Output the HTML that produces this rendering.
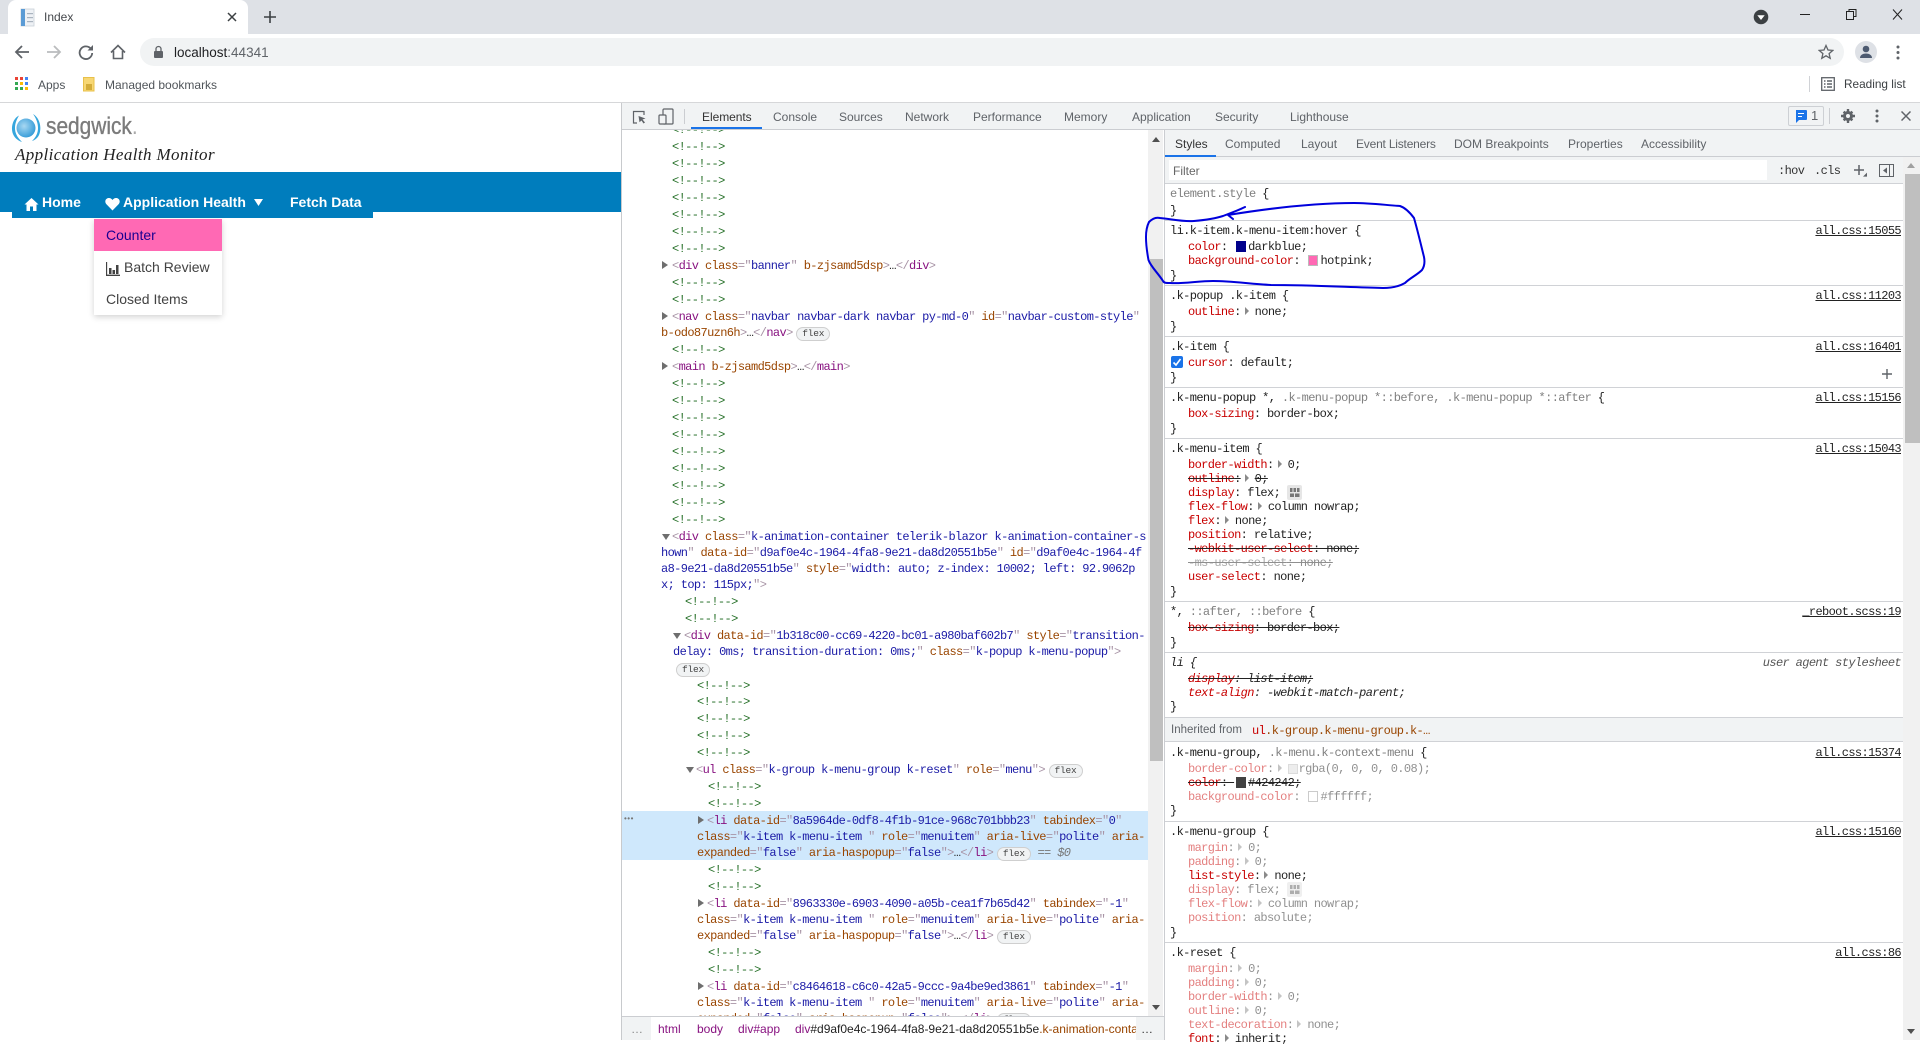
<!DOCTYPE html>
<html lang="en"><head><meta charset="utf-8"><title>Index</title>
<style>
html,body{margin:0;padding:0;width:1920px;height:1040px;overflow:hidden;background:#fff;font-family:"Liberation Sans",sans-serif}
.b{position:absolute}
.s{position:absolute;white-space:pre;font:12px/16px "Liberation Sans",sans-serif;color:#5f6368}
.l{position:absolute;white-space:pre;font:12px/16px "Liberation Mono",monospace;letter-spacing:-.62px;color:#222;margin-top:1px}
.c{color:#236e25}.t{color:#881280}.a{color:#994500}.v{color:#1a1aa6}.x{color:#a894a6}
.p{color:#c80000}.g{color:#808080}.d{opacity:.5}.st{text-decoration:line-through;text-decoration-color:#222}
.u{text-decoration:underline;color:#222;text-underline-offset:1px}
.r{right:19px}
.w{display:inline-block;width:10px;height:10px;margin:0 2px;vertical-align:-1px;box-sizing:border-box}
.tr{display:inline-block;width:14px;height:8px;position:relative}
.tr:before{content:"";position:absolute;left:4px;top:0;border-left:4px solid #8a8a8a;border-top:4px solid transparent;border-bottom:4px solid transparent}
.ar{position:absolute;width:0;height:0;border-left:4px solid transparent;border-right:4px solid transparent}
.tg{position:absolute;width:0;height:0;border-top:4.5px solid transparent;border-bottom:4.5px solid transparent;border-left:6px solid #6e6e6e;margin-top:1px}
.td{position:absolute;width:0;height:0;border-left:4.5px solid transparent;border-right:4.5px solid transparent;border-top:6px solid #6e6e6e;margin-top:1px}
.fx{display:inline-block;font:9.5px/12px "Liberation Mono",monospace;letter-spacing:-.2px;color:#444;background:#f1f3f4;border:1px solid #cfcfcf;border-radius:7px;padding:0 5px;height:12px;vertical-align:0;margin-left:-3px}
.h{position:absolute;left:1165px;width:738px;height:1px;background:#d0d2d6}
</style></head><body>

<!-- browser chrome -->
<div class="b" style="left:0;top:0;width:1920px;height:34px;background:#dee1e6"></div>
<div class="b" style="left:8px;top:0;width:240px;height:34px;background:#fff;border-radius:8px 8px 0 0"></div>
<svg class="b" style="left:20px;top:8px" width="16" height="20" viewBox="0 0 16 20"><rect x="1" y="1" width="13" height="17" fill="#eef1f5" stroke="#c9d0d8" stroke-width=".8"/><rect x="1" y="1" width="4" height="17" fill="#5b9bd5"/><rect x="7" y="5" width="6" height="1.2" fill="#aab4bf"/><rect x="7" y="9" width="6" height="1.2" fill="#aab4bf"/><rect x="7" y="13" width="6" height="1.2" fill="#aab4bf"/></svg>
<div class="s" style="left:44px;top:9px;color:#45484c">Index</div>
<svg class="b" style="left:227px;top:12px" width="10" height="10" viewBox="0 0 10 10"><path d="M1 1l8 8M9 1L1 9" stroke="#3c4043" stroke-width="1.5"/></svg>
<svg class="b" style="left:263px;top:10px" width="14" height="14" viewBox="0 0 14 14"><path d="M7 1v12M1 7h12" stroke="#3c4043" stroke-width="1.6"/></svg>
<svg class="b" style="left:1753px;top:9px" width="16" height="16" viewBox="0 0 16 16"><circle cx="8" cy="8" r="7.3" fill="#3c4043"/><path d="M4.3 6.3h7.4L8 11z" fill="#fff"/></svg>
<svg class="b" style="left:1799px;top:8px" width="104" height="14" viewBox="0 0 104 14"><path d="M1 6.5h10" stroke="#222" stroke-width="1"/><path d="M47.5 3.5h7v8h-7zM50 3.5V1.500h7v7h-2.500" fill="none" stroke="#222" stroke-width="1"/><path d="M94 1.500l9 10M103 1.500l-9 10" stroke="#222" stroke-width="1"/></svg>

<div class="b" style="left:0;top:34px;width:1920px;height:68px;background:#fff"></div>
<svg class="b" style="left:14px;top:44px" width="128" height="16" viewBox="0 0 128 16"><path d="M15 8H2M8 2L2 8l6 6" fill="none" stroke="#5f6368" stroke-width="1.8"/><path d="M33 8h13M40 2l6 6-6 6" fill="none" stroke="#babcbe" stroke-width="1.8"/><path d="M77 5A6.300 6.300 0 1 0 78.200 9" fill="none" stroke="#5f6368" stroke-width="1.8"/><path d="M79 1v5.500h-5.500z" fill="#5f6368"/><path d="M97 8.500L104 1.500l7 7M99.500 7v7.500h9V7" fill="none" stroke="#5f6368" stroke-width="1.600"/></svg>
<div class="b" style="left:140px;top:38px;width:1704px;height:28px;background:#f1f3f4;border-radius:14px"></div>
<svg class="b" style="left:153px;top:45px" width="11" height="14" viewBox="0 0 11 14"><path d="M3 6V4a2.500 2.500 0 0 1 5 0v2" fill="none" stroke="#5f6368" stroke-width="1.300"/><rect x="1" y="6" width="9" height="7" rx="1" fill="#5f6368"/></svg>
<div class="s" style="left:174px;top:44px;font-size:13.500px;color:#202124;margin-top:.5px">localhost<span style="color:#5f6368">:44341</span></div>
<svg class="b" style="left:1818px;top:44px" width="16" height="16" viewBox="0 0 16 16"><path d="M8 1.500l2 4.500 4.800.400-3.700 3.200 1.100 4.700L8 11.800l-4.200 2.500 1.100-4.700L1.200 6.400 6 6z" fill="none" stroke="#5f6368" stroke-width="1.300"/></svg>
<div class="b" style="left:1855px;top:41px;width:22px;height:22px;border-radius:50%;background:#dee1e6"></div>
<svg class="b" style="left:1859px;top:45px" width="14" height="14" viewBox="0 0 14 14"><circle cx="7" cy="4" r="3.300" fill="#4d5a70"/><path d="M1 13c0-3 3-4.500 6-4.500s6 1.500 6 4.500z" fill="#4d5a70"/></svg>
<svg class="b" style="left:1896px;top:45px" width="4" height="15" viewBox="0 0 4 15"><circle cx="2" cy="2" r="1.500" fill="#5f6368"/><circle cx="2" cy="7.500" r="1.500" fill="#5f6368"/><circle cx="2" cy="13" r="1.500" fill="#5f6368"/></svg>

<!-- bookmarks -->
<svg class="b" style="left:15px;top:77px" width="14" height="14" viewBox="0 0 14 14"><rect width="3" height="3" fill="#ea4335"/><rect x="5" width="3" height="3" fill="#ea4335"/><rect x="10" width="3" height="3" fill="#4285f4"/><rect y="5" width="3" height="3" fill="#34a853"/><rect x="5" y="5" width="3" height="3" fill="#fbbc05"/><rect x="10" y="5" width="3" height="3" fill="#4285f4"/><rect y="10" width="3" height="3" fill="#34a853"/><rect x="5" y="10" width="3" height="3" fill="#34a853"/><rect x="10" y="10" width="3" height="3" fill="#fbbc05"/></svg>
<div class="s" style="left:38px;top:77px;font-size:12px;color:#50555a">Apps</div>
<svg class="b" style="left:83px;top:77px" width="13" height="15" viewBox="0 0 13 15"><rect x=".5" y=".5" width="10.500" height="13.500" fill="#f7d774" stroke="#e8c04a"/><rect x="3" y="7" width="6" height="6" fill="#d3ac3a"/></svg>
<div class="s" style="left:105px;top:77px;font-size:12px;color:#50555a">Managed bookmarks</div>
<div class="b" style="left:1809px;top:76px;width:1px;height:16px;background:#d0d2d6"></div>
<svg class="b" style="left:1821px;top:77px" width="14" height="14" viewBox="0 0 14 14"><rect x=".7" y=".7" width="12.600" height="12.600" fill="none" stroke="#5f6368" stroke-width="1.300"/><path d="M3 4h1.500M6 4h5M3 7h1.500M6 7h5M3 10h1.500M6 10h5" stroke="#5f6368" stroke-width="1.400"/></svg>
<div class="s" style="left:1844px;top:76px;font-size:11.800px;color:#3c4043">Reading list</div>
<div class="b" style="left:0;top:102px;width:1920px;height:1px;background:#d6d7d9"></div>

<!-- page -->
<svg class="b" style="left:10px;top:112px" width="34" height="32" viewBox="0 0 34 32"><defs><radialGradient id="g1" cx=".4" cy=".4" r=".7"><stop offset="0" stop-color="#a8d8f2"/><stop offset="1" stop-color="#2a95d5"/></radialGradient></defs><circle cx="16" cy="16" r="9.500" fill="url(#g1)"/><path d="M9 3.500C2 7 0 18 4 24c2 3 5 5 8 6-5-5-7-9-7-14s2-9 4-12.500z" fill="#35a6dd"/><path d="M23 2c7 4 9 14 6 21-1.500 3-4 5-7 6 4-4 6-8 6-13s-2-10-5-14z" fill="#35a6dd"/></svg>
<div class="s" style="left:46px;top:112px;font:24px/30px 'Liberation Sans',sans-serif;transform:scaleX(.87);transform-origin:0 0;color:#7b7b7b;-webkit-text-stroke:.35px #7b7b7b">sedgwick<span style="color:#aaa;-webkit-text-stroke:0">.</span></div>
<div class="s" style="left:15px;top:143px;font:italic 17px/24px 'Liberation Serif',serif;letter-spacing:.39px;color:#222">Application Health Monitor</div>
<div class="b" style="left:0;top:172px;width:621px;height:40px;background:#007dbd"></div>
<div class="b" style="left:12px;top:212px;width:361px;height:6px;background:#007dbd"></div>
<svg class="b" style="left:24px;top:197px" width="15" height="14" viewBox="0 0 15 14"><path d="M7.500 1L.5 7.500h2V14h3.500V9.500h3V14H12.500V7.500h2z" fill="#fff"/></svg>
<div class="s" style="left:42px;top:194px;font:bold 14px/17px 'Liberation Sans',sans-serif;color:#fff">Home</div>
<svg class="b" style="left:105px;top:197px" width="15" height="14" viewBox="0 0 15 14"><path d="M7.500 13.500L1.200 7C-.5 5 .2 1.500 3.500 1c1.800-.2 3.200.8 4 2 .8-1.200 2.200-2.200 4-2 3.300.5 4 4 2.300 6z" fill="#fff"/></svg>
<div class="s" style="left:123px;top:194px;font:bold 14px/17px 'Liberation Sans',sans-serif;color:#fff">Application Health</div>
<svg class="b" style="left:254px;top:199px" width="9" height="7" viewBox="0 0 9 7"><path d="M0 0h9L4.500 7z" fill="#fff"/></svg>
<div class="s" style="left:290px;top:194px;font:bold 14px/17px 'Liberation Sans',sans-serif;color:#fff">Fetch Data</div>
<div class="b" style="left:94px;top:219px;width:128px;height:96px;background:#fff;box-shadow:0 2px 6px rgba(0,0,0,.18)"></div>
<div class="b" style="left:94px;top:219px;width:128px;height:32px;background:#ff69b4"></div>
<div class="s" style="left:106px;top:227px;font:14px/17px 'Liberation Sans',sans-serif;color:#1a0090">Counter</div>
<svg class="b" style="left:106px;top:262px" width="14" height="14" viewBox="0 0 14 14"><path d="M.5 0v13.300H14" fill="none" stroke="#424242" stroke-width="1.300"/><rect x="3" y="6" width="2.500" height="6" fill="#424242"/><rect x="6.500" y="8" width="2.500" height="4" fill="#424242"/><rect x="10" y="3" width="2.500" height="9" fill="#424242"/></svg>
<div class="s" style="left:124px;top:259px;font:14px/17px 'Liberation Sans',sans-serif;color:#424242">Batch Review</div>
<div class="s" style="left:106px;top:291px;font:14px/17px 'Liberation Sans',sans-serif;color:#424242">Closed Items</div>

<!-- devtools frame -->
<div class="b" style="left:621px;top:103px;width:1px;height:937px;background:#c8cacd"></div>
<div class="b" style="left:622px;top:103px;width:1298px;height:26px;background:#f1f3f4"></div>
<div class="b" style="left:622px;top:129px;width:1298px;height:1px;background:#cbcdd1"></div>
<svg class="b" style="left:632px;top:110px" width="15" height="15" viewBox="0 0 15 15"><path d="M5 13H1.500V1.500H12V5" fill="none" stroke="#5f6368" stroke-width="1.200"/><path d="M6.500 6l7 2.500-3 1 2.500 3-1.500 1-2-3-2 1.800z" fill="#5f6368"/></svg>
<svg class="b" style="left:658px;top:108px" width="16" height="17" viewBox="0 0 16 17"><rect x="5" y="1" width="10" height="15" rx="1" fill="none" stroke="#5f6368" stroke-width="1.200"/><rect x="1" y="7" width="7" height="9" rx="1" fill="#f1f3f4" stroke="#5f6368" stroke-width="1.200"/></svg>
<div class="b" style="left:684px;top:109px;width:1px;height:15px;background:#cbcdd1"></div>
<div class="s" style="left:702px;top:109px;color:#333;letter-spacing:-.05px">Elements</div>
<div class="b" style="left:691px;top:127px;width:71px;height:2px;background:#1a73e8"></div>
<div class="s" style="left:773px;top:109px">Console</div>
<div class="s" style="left:839px;top:109px;letter-spacing:-.05px">Sources</div>
<div class="s" style="left:905px;top:109px">Network</div>
<div class="s" style="left:973px;top:109px">Performance</div>
<div class="s" style="left:1064px;top:109px">Memory</div>
<div class="s" style="left:1132px;top:109px">Application</div>
<div class="s" style="left:1215px;top:109px">Security</div>
<div class="s" style="left:1290px;top:109px">Lighthouse</div>
<div class="b" style="left:1788px;top:106px;width:34px;height:18px;border:1px solid #cdd0d4;border-radius:2px"></div>
<svg class="b" style="left:1795px;top:110px" width="12" height="13" viewBox="0 0 12 13"><path d="M1 0h10a1 1 0 0 1 1 1v8a1 1 0 0 1-1 1H4l-3 3z" fill="#1a73e8"/><path d="M3 3.500h6M3 6.500h4" stroke="#fff" stroke-width="1"/></svg>
<div class="s" style="left:1811px;top:108px;color:#5f6368;font-size:13px">1</div>
<div class="b" style="left:1829px;top:108px;width:1px;height:16px;background:#cbcdd1"></div>
<svg class="b" style="left:1841px;top:109px" width="14" height="14" viewBox="0 0 14 14"><path d="M7 3.500a3.500 3.500 0 1 0 0 7 3.500 3.500 0 0 0 0-7z" fill="none" stroke="#5f6368" stroke-width="3"/><path d="M5.800 0h2.400v3H5.800zM5.800 11h2.400v3H5.800zM0 5.800h3v2.400H0zM11 5.800h3v2.400h-3zM1.800 3.500L3.500 1.800l2 2-1.700 1.700zM8.500 10.200l1.700-1.700 2 2-1.700 1.700zM10.500 1.800l1.700 1.700-2 2-1.700-1.700zM3.800 8.500l1.700 1.700-2 2-1.700-1.700z" fill="#5f6368"/></svg>
<svg class="b" style="left:1875px;top:109px" width="4" height="14" viewBox="0 0 4 14"><circle cx="2" cy="2" r="1.500" fill="#5f6368"/><circle cx="2" cy="7" r="1.500" fill="#5f6368"/><circle cx="2" cy="12" r="1.500" fill="#5f6368"/></svg>
<svg class="b" style="left:1901px;top:111px" width="10" height="10" viewBox="0 0 10 10"><path d="M.5.5l9 9M9.500.5l-9 9" stroke="#5f6368" stroke-width="1.500"/></svg>

<!-- elements -->
<div class="b" style="left:622px;top:811px;width:526px;height:49px;background:#cfe8fc"></div>
<div class="s" style="left:624px;top:811px;font-size:8px;letter-spacing:.5px;color:#777">•••</div>
<div class="b" style="left:0;top:0;width:1148px;height:1016px;clip-path:inset(130px 0 0 622px)">
<div class="l c" style="left:672px;top:121px">&lt;!--!--&gt;</div>
<div class="l c" style="left:672px;top:138px">&lt;!--!--&gt;</div>
<div class="l c" style="left:672px;top:155px">&lt;!--!--&gt;</div>
<div class="l c" style="left:672px;top:172px">&lt;!--!--&gt;</div>
<div class="l c" style="left:672px;top:189px">&lt;!--!--&gt;</div>
<div class="l c" style="left:672px;top:206px">&lt;!--!--&gt;</div>
<div class="l c" style="left:672px;top:223px">&lt;!--!--&gt;</div>
<div class="l c" style="left:672px;top:240px">&lt;!--!--&gt;</div>
<i class="tg" style="left:662px;top:260px"></i>
<div class="l" style="left:672px;top:257px"><span class="x">&lt;</span><span class="t">div</span> <span class="a">class</span><span class="x">="</span><span class="v">banner</span><span class="x">"</span> <span class="a">b-zjsamd5dsp</span><span class="x">&gt;</span>…<span class="x">&lt;/</span><span class="t">div</span><span class="x">&gt;</span></div>
<div class="l c" style="left:672px;top:274px">&lt;!--!--&gt;</div>
<div class="l c" style="left:672px;top:291px">&lt;!--!--&gt;</div>
<i class="tg" style="left:662px;top:311px"></i>
<div class="l" style="left:672px;top:308px"><span class="x">&lt;</span><span class="t">nav</span> <span class="a">class</span><span class="x">="</span><span class="v">navbar navbar-dark navbar py-md-0</span><span class="x">"</span> <span class="a">id</span><span class="x">="</span><span class="v">navbar-custom-style</span><span class="x">"</span></div>
<div class="l" style="left:661px;top:324px"><span class="a">b-odo87uzn6h</span><span class="x">&gt;</span>…<span class="x">&lt;/</span><span class="t">nav</span><span class="x">&gt;</span> <span class="fx">flex</span></div>
<div class="l c" style="left:672px;top:341px">&lt;!--!--&gt;</div>
<i class="tg" style="left:662px;top:361px"></i>
<div class="l" style="left:672px;top:358px"><span class="x">&lt;</span><span class="t">main</span> <span class="a">b-zjsamd5dsp</span><span class="x">&gt;</span>…<span class="x">&lt;/</span><span class="t">main</span><span class="x">&gt;</span></div>
<div class="l c" style="left:672px;top:375px">&lt;!--!--&gt;</div>
<div class="l c" style="left:672px;top:392px">&lt;!--!--&gt;</div>
<div class="l c" style="left:672px;top:409px">&lt;!--!--&gt;</div>
<div class="l c" style="left:672px;top:426px">&lt;!--!--&gt;</div>
<div class="l c" style="left:672px;top:443px">&lt;!--!--&gt;</div>
<div class="l c" style="left:672px;top:460px">&lt;!--!--&gt;</div>
<div class="l c" style="left:672px;top:477px">&lt;!--!--&gt;</div>
<div class="l c" style="left:672px;top:494px">&lt;!--!--&gt;</div>
<div class="l c" style="left:672px;top:511px">&lt;!--!--&gt;</div>
<i class="td" style="left:662px;top:533px"></i>
<div class="l" style="left:672px;top:528px"><span class="x">&lt;</span><span class="t">div</span> <span class="a">class</span><span class="x">="</span><span class="v">k-animation-container telerik-blazor k-animation-container-s</span></div>
<div class="l" style="left:661px;top:544px"><span class="v">hown</span><span class="x">"</span> <span class="a">data-id</span><span class="x">="</span><span class="v">d9af0e4c-1964-4fa8-9e21-da8d20551b5e</span><span class="x">"</span> <span class="a">id</span><span class="x">="</span><span class="v">d9af0e4c-1964-4f</span></div>
<div class="l" style="left:661px;top:560px"><span class="v">a8-9e21-da8d20551b5e</span><span class="x">"</span> <span class="a">style</span><span class="x">="</span><span class="v">width: auto; z-index: 10002; left: 92.9062p</span></div>
<div class="l" style="left:661px;top:576px"><span class="v">x; top: 115px;</span><span class="x">"&gt;</span></div>
<div class="l c" style="left:685px;top:593px">&lt;!--!--&gt;</div>
<div class="l c" style="left:685px;top:610px">&lt;!--!--&gt;</div>
<i class="td" style="left:673px;top:632px"></i>
<div class="l" style="left:684px;top:627px"><span class="x">&lt;</span><span class="t">div</span> <span class="a">data-id</span><span class="x">="</span><span class="v">1b318c00-cc69-4220-bc01-a980baf602b7</span><span class="x">"</span> <span class="a">style</span><span class="x">="</span><span class="v">transition-</span></div>
<div class="l" style="left:673px;top:643px"><span class="v">delay: 0ms; transition-duration: 0ms;</span><span class="x">"</span> <span class="a">class</span><span class="x">="</span><span class="v">k-popup k-menu-popup</span><span class="x">"&gt;</span></div>
<div class="l" style="left:679px;top:660px"><span class="fx">flex</span></div>
<div class="l c" style="left:697px;top:677px">&lt;!--!--&gt;</div>
<div class="l c" style="left:697px;top:693px">&lt;!--!--&gt;</div>
<div class="l c" style="left:697px;top:710px">&lt;!--!--&gt;</div>
<div class="l c" style="left:697px;top:727px">&lt;!--!--&gt;</div>
<div class="l c" style="left:697px;top:744px">&lt;!--!--&gt;</div>
<i class="td" style="left:686px;top:766px"></i>
<div class="l" style="left:696px;top:761px"><span class="x">&lt;</span><span class="t">ul</span> <span class="a">class</span><span class="x">="</span><span class="v">k-group k-menu-group k-reset</span><span class="x">"</span> <span class="a">role</span><span class="x">="</span><span class="v">menu</span><span class="x">"&gt;</span> <span class="fx">flex</span></div>
<div class="l c" style="left:708px;top:778px">&lt;!--!--&gt;</div>
<div class="l c" style="left:708px;top:795px">&lt;!--!--&gt;</div>
<i class="tg" style="left:698px;top:815px"></i>
<div class="l" style="left:707px;top:812px"><span class="x">&lt;</span><span class="t">li</span> <span class="a">data-id</span><span class="x">="</span><span class="v">8a5964de-0df8-4f1b-91ce-968c701bbb23</span><span class="x">"</span> <span class="a">tabindex</span><span class="x">="</span><span class="v">0</span><span class="x">"</span></div>
<div class="l" style="left:697px;top:828px"><span class="a">class</span><span class="x">="</span><span class="v">k-item k-menu-item </span><span class="x">"</span> <span class="a">role</span><span class="x">="</span><span class="v">menuitem</span><span class="x">"</span> <span class="a">aria-live</span><span class="x">="</span><span class="v">polite</span><span class="x">"</span> <span class="a">aria-</span></div>
<div class="l" style="left:697px;top:844px"><span class="a">expanded</span><span class="x">="</span><span class="v">false</span><span class="x">"</span> <span class="a">aria-haspopup</span><span class="x">="</span><span class="v">false</span><span class="x">"&gt;</span>…<span class="x">&lt;/</span><span class="t">li</span><span class="x">&gt;</span> <span class="fx">flex</span> <span style="color:#777">== <i>$0</i></span></div>
<div class="l c" style="left:708px;top:861px">&lt;!--!--&gt;</div>
<div class="l c" style="left:708px;top:878px">&lt;!--!--&gt;</div>
<i class="tg" style="left:698px;top:898px"></i>
<div class="l" style="left:707px;top:895px"><span class="x">&lt;</span><span class="t">li</span> <span class="a">data-id</span><span class="x">="</span><span class="v">8963330e-6903-4090-a05b-cea1f7b65d42</span><span class="x">"</span> <span class="a">tabindex</span><span class="x">="</span><span class="v">-1</span><span class="x">"</span></div>
<div class="l" style="left:697px;top:911px"><span class="a">class</span><span class="x">="</span><span class="v">k-item k-menu-item </span><span class="x">"</span> <span class="a">role</span><span class="x">="</span><span class="v">menuitem</span><span class="x">"</span> <span class="a">aria-live</span><span class="x">="</span><span class="v">polite</span><span class="x">"</span> <span class="a">aria-</span></div>
<div class="l" style="left:697px;top:927px"><span class="a">expanded</span><span class="x">="</span><span class="v">false</span><span class="x">"</span> <span class="a">aria-haspopup</span><span class="x">="</span><span class="v">false</span><span class="x">"&gt;</span>…<span class="x">&lt;/</span><span class="t">li</span><span class="x">&gt;</span> <span class="fx">flex</span></div>
<div class="l c" style="left:708px;top:944px">&lt;!--!--&gt;</div>
<div class="l c" style="left:708px;top:961px">&lt;!--!--&gt;</div>
<i class="tg" style="left:698px;top:981px"></i>
<div class="l" style="left:707px;top:978px"><span class="x">&lt;</span><span class="t">li</span> <span class="a">data-id</span><span class="x">="</span><span class="v">c8464618-c6c0-42a5-9ccc-9a4be9ed3861</span><span class="x">"</span> <span class="a">tabindex</span><span class="x">="</span><span class="v">-1</span><span class="x">"</span></div>
<div class="l" style="left:697px;top:994px"><span class="a">class</span><span class="x">="</span><span class="v">k-item k-menu-item </span><span class="x">"</span> <span class="a">role</span><span class="x">="</span><span class="v">menuitem</span><span class="x">"</span> <span class="a">aria-live</span><span class="x">="</span><span class="v">polite</span><span class="x">"</span> <span class="a">aria-</span></div>
<div class="l" style="left:697px;top:1010px"><span class="a">expanded</span><span class="x">="</span><span class="v">false</span><span class="x">"</span> <span class="a">aria-haspopup</span><span class="x">="</span><span class="v">false</span><span class="x">"&gt;</span>…<span class="x">&lt;/</span><span class="t">li</span><span class="x">&gt;</span> <span class="fx">flex</span></div>
</div>
<!-- elements scrollbar -->
<div class="b" style="left:1148px;top:130px;width:15px;height:886px;background:#f1f1f1"></div>
<div class="b" style="left:1150px;top:259px;width:13px;height:502px;background:#bfbfbf"></div>
<i class="ar" style="left:1152px;top:137px;border-bottom:5px solid #505050"></i>
<i class="ar" style="left:1152px;top:1005px;border-top:5px solid #505050"></i>
<div class="b" style="left:1163px;top:130px;width:2px;height:910px;background:#fff"></div>
<div class="b" style="left:1164px;top:130px;width:1px;height:910px;background:#cbcdd1"></div>

<!-- breadcrumbs -->
<div class="b" style="left:622px;top:1016px;width:542px;height:24px;background:#f1f3f4;border-top:1px solid #cbcdd1;box-sizing:border-box"></div>
<div class="b" style="left:651px;top:1017px;width:485px;height:23px;background:#fff"></div>
<div class="s" style="left:631px;top:1021px;color:#888">…</div>
<div class="s" style="left:658px;top:1021px;color:#881280">html</div>
<div class="s" style="left:697px;top:1021px;color:#881280">body</div>
<div class="s" style="left:738px;top:1021px;color:#881280">div<span style="color:#881280">#app</span></div>
<div class="b" style="left:795px;top:1017px;width:341px;height:23px;overflow:hidden"><div class="s" style="left:0;top:4px;color:#881280">div<span style="color:#222">#d9af0e4c-1964-4fa8-9e21-da8d20551b5e</span><span style="color:#994500">.k-animation-container.telerik-blazor</span></div></div>
<div class="s" style="left:1141px;top:1021px;color:#333">…</div>

<!-- styles -->
<div class="b" style="left:1165px;top:130px;width:755px;height:27px;background:#f1f3f4"></div>
<div class="b" style="left:1165px;top:156px;width:755px;height:1px;background:#cbcdd1"></div>
<div class="b" style="left:1165px;top:155px;width:51px;height:2px;background:#1a73e8"></div>
<div class="s" style="left:1175px;top:136px;color:#333">Styles</div>
<div class="s" style="left:1225px;top:136px">Computed</div>
<div class="s" style="left:1301px;top:136px">Layout</div>
<div class="s" style="left:1356px;top:136px;letter-spacing:-.2px">Event Listeners</div>
<div class="s" style="left:1454px;top:136px">DOM Breakpoints</div>
<div class="s" style="left:1568px;top:136px">Properties</div>
<div class="s" style="left:1641px;top:136px">Accessibility</div>
<div class="b" style="left:1165px;top:157px;width:738px;height:26px;background:#f1f3f4"></div>
<div class="b" style="left:1169px;top:160px;width:598px;height:20px;background:#fff"></div>
<div class="s" style="left:1173px;top:163px;color:#666">Filter</div>
<div class="l" style="left:1778px;top:162px;color:#333">:hov</div>
<div class="l" style="left:1814px;top:162px;color:#333">.cls</div>
<svg class="b" style="left:1853px;top:164px" width="20" height="18" viewBox="0 0 20 18"><path d="M6 1v10M1 6h10" stroke="#5f6368" stroke-width="1.500"/><path d="M15 12v5h-5z" fill="#5f6368" transform="translate(2 -1) scale(.8)"/></svg>
<svg class="b" style="left:1879px;top:164px" width="15" height="13" viewBox="0 0 15 13"><rect x=".5" y=".5" width="14" height="12" fill="none" stroke="#5f6368"/><path d="M10.500 .5v12" stroke="#5f6368"/><path d="M8 3.500v6L4 6.500z" fill="#5f6368"/></svg>
<div class="h" style="top:183px"></div>
<div class="l" style="left:1170px;top:185px"><span class="g">element.style</span> {</div>
<div class="l" style="left:1170px;top:202px">}</div>
<div class="h" style="top:220px"></div>
<div class="l" style="left:1170px;top:222px">li.k-item.k-menu-item:hover {</div>
<div class="l u r" style="top:222px">all.css:15055</div>
<div class="l" style="left:1188px;top:238px"><span class="p">color</span>: <i class="w" style="background:#00008b;margin-left:2px;vertical-align:-2px;width:10px;height:11px;margin-right:2px"></i>darkblue;</div>
<div class="l" style="left:1188px;top:252px"><span class="p">background-color</span>: <i class="w" style="background:#ff69b4;border:1px solid #bbb;vertical-align:-2px;height:11px"></i>hotpink;</div>
<div class="l" style="left:1170px;top:267px">}</div>
<div class="h" style="top:285px"></div>
<div class="l" style="left:1170px;top:287px">.k-popup .k-item {</div>
<div class="l u r" style="top:287px">all.css:11203</div>
<div class="l" style="left:1188px;top:303px"><span class="p">outline</span>:<i class="tr"></i>none;</div>
<div class="l" style="left:1170px;top:318px">}</div>
<div class="h" style="top:336px"></div>
<div class="l" style="left:1170px;top:338px">.k-item {</div>
<div class="l u r" style="top:338px">all.css:16401</div>
<svg class="b" style="left:1171px;top:356px" width="12" height="12" viewBox="0 0 12 12"><rect width="12" height="12" rx="2" fill="#1a73e8"/><path d="M2.500 6.500l2.500 2.500 4.500-6" fill="none" stroke="#fff" stroke-width="1.600"/></svg>
<div class="l" style="left:1188px;top:354px"><span class="p">cursor</span>: default;</div>
<div class="l" style="left:1170px;top:369px">}</div>
<svg class="b" style="left:1882px;top:369px" width="10" height="10" viewBox="0 0 10 10"><path d="M5 0v10M0 5h10" stroke="#5f6368" stroke-width="1.400"/></svg>
<div class="h" style="top:387px"></div>
<div class="l" style="left:1170px;top:389px">.k-menu-popup *, <span class="g">.k-menu-popup *::before, .k-menu-popup *::after</span> {</div>
<div class="l u r" style="top:389px">all.css:15156</div>
<div class="l" style="left:1188px;top:405px"><span class="p">box-sizing</span>: border-box;</div>
<div class="l" style="left:1170px;top:420px">}</div>
<div class="h" style="top:438px"></div>
<div class="l" style="left:1170px;top:440px">.k-menu-item {</div>
<div class="l u r" style="top:440px">all.css:15043</div>
<div class="l" style="left:1188px;top:456px"><span class="p">border-width</span>:<i class="tr"></i>0;</div>
<div class="l st" style="left:1188px;top:470px"><span class="p">outline</span>:<i class="tr"></i>0;</div>
<div class="l" style="left:1188px;top:484px"><span class="p">display</span>: flex;</div>
<svg class="b" style="left:1287px;top:485px" width="15" height="15" viewBox="0 0 15 15"><rect width="15" height="15" rx="2" fill="#e6e6e6"/><path d="M3 3h2.500v4H3zM6.500 3H9v4H6.500zM10 3h2.500v4H10zM3 8.500h4V12H3zM8 8.500h4.500V12H8z" fill="#777"/></svg>
<div class="l" style="left:1188px;top:498px"><span class="p">flex-flow</span>:<i class="tr"></i>column nowrap;</div>
<div class="l" style="left:1188px;top:512px"><span class="p">flex</span>:<i class="tr"></i>none;</div>
<div class="l" style="left:1188px;top:526px"><span class="p">position</span>: relative;</div>
<div class="l st" style="left:1188px;top:540px"><span class="p">-webkit-user-select</span>: none;</div>
<div class="l st d" style="left:1188px;top:554px"><span class="p" style="color:#555">-ms-user-select</span>: none;</div>
<div class="l" style="left:1188px;top:568px"><span class="p">user-select</span>: none;</div>
<div class="l" style="left:1170px;top:583px">}</div>
<div class="h" style="top:601px"></div>
<div class="l" style="left:1170px;top:603px">*, <span class="g">::after, ::before</span> {</div>
<div class="l u r" style="top:603px">_reboot.scss:19</div>
<div class="l st" style="left:1188px;top:619px"><span class="p">box-sizing</span>: border-box;</div>
<div class="l" style="left:1170px;top:634px">}</div>
<div class="h" style="top:652px"></div>
<div class="l" style="left:1170px;top:654px;font-style:italic">li {</div>
<div class="l r" style="top:654px;font-style:italic;color:#555">user agent stylesheet</div>
<div class="l st" style="left:1188px;top:670px;font-style:italic"><span class="p">display</span>: list-item;</div>
<div class="l" style="left:1188px;top:684px;font-style:italic"><span class="p">text-align</span>: -webkit-match-parent;</div>
<div class="l" style="left:1170px;top:698px">}</div>
<div class="b" style="left:1165px;top:717px;width:738px;height:25px;background:#f1f3f4;border-top:1px solid #d0d2d6;border-bottom:1px solid #d0d2d6;box-sizing:border-box"></div>
<div class="s" style="left:1171px;top:722px;font-size:11.500px;color:#5f6368">Inherited from</div>
<div class="l" style="left:1252px;top:722px"><span style="color:#c80000">ul</span><span style="color:#994500">.k-group.k-menu-group.k-…</span></div>
<div class="l" style="left:1170px;top:744px">.k-menu-group, <span class="g">.k-menu.k-context-menu</span> {</div>
<div class="l u r" style="top:744px">all.css:15374</div>
<div class="l d" style="left:1188px;top:760px"><span class="p">border-color</span>:<i class="tr"></i><i class="w" style="background:#ddd;border:1px solid #bbb;margin:0 1px 0 0;vertical-align:-2px"></i>rgba(0, 0, 0, 0.08);</div>
<div class="l st" style="left:1188px;top:774px"><span class="p">color</span>: <i class="w" style="background:#424242;height:11px;vertical-align:-2px"></i>#424242;</div>
<div class="l d" style="left:1188px;top:788px"><span class="p">background-color</span>: <i class="w" style="background:#fff;border:1px solid #999;height:11px;vertical-align:-2px"></i>#ffffff;</div>
<div class="l" style="left:1170px;top:802px">}</div>
<div class="h" style="top:821px"></div>
<div class="l" style="left:1170px;top:823px">.k-menu-group {</div>
<div class="l u r" style="top:823px">all.css:15160</div>
<div class="l d" style="left:1188px;top:839px"><span class="p">margin</span>:<i class="tr"></i>0;</div>
<div class="l d" style="left:1188px;top:853px"><span class="p">padding</span>:<i class="tr"></i>0;</div>
<div class="l" style="left:1188px;top:867px"><span class="p">list-style</span>:<i class="tr"></i>none;</div>
<div class="l d" style="left:1188px;top:881px"><span class="p">display</span>: flex;</div>
<svg class="b" style="left:1287px;top:882px;opacity:.6" width="15" height="15" viewBox="0 0 15 15"><rect width="15" height="15" rx="2" fill="#e6e6e6"/><path d="M3 3h2.500v4H3zM6.500 3H9v4H6.500zM10 3h2.500v4H10zM3 8.500h4V12H3zM8 8.500h4.500V12H8z" fill="#777"/></svg>
<div class="l d" style="left:1188px;top:895px"><span class="p">flex-flow</span>:<i class="tr"></i>column nowrap;</div>
<div class="l d" style="left:1188px;top:909px"><span class="p">position</span>: absolute;</div>
<div class="l" style="left:1170px;top:924px">}</div>
<div class="h" style="top:942px"></div>
<div class="l" style="left:1170px;top:944px">.k-reset {</div>
<div class="l u r" style="top:944px">all.css:86</div>
<div class="l d" style="left:1188px;top:960px"><span class="p">margin</span>:<i class="tr"></i>0;</div>
<div class="l d" style="left:1188px;top:974px"><span class="p">padding</span>:<i class="tr"></i>0;</div>
<div class="l d" style="left:1188px;top:988px"><span class="p">border-width</span>:<i class="tr"></i>0;</div>
<div class="l d" style="left:1188px;top:1002px"><span class="p">outline</span>:<i class="tr"></i>0;</div>
<div class="l d" style="left:1188px;top:1016px"><span class="p">text-decoration</span>:<i class="tr"></i>none;</div>
<div class="l" style="left:1188px;top:1030px"><span class="p">font</span>:<i class="tr"></i>inherit;</div>
<!-- styles scrollbar -->
<div class="b" style="left:1903px;top:157px;width:17px;height:883px;background:#f1f1f1"></div>
<div class="b" style="left:1905px;top:174px;width:15px;height:269px;background:#bfbfbf"></div>
<i class="ar" style="left:1907px;top:163px;border-bottom:5px solid #a0a0a0"></i>
<i class="ar" style="left:1907px;top:1029px;border-top:5px solid #505050"></i>

<!-- hand-drawn annotation -->
<svg class="b" style="left:0;top:0;pointer-events:none" width="1920" height="1040" viewBox="0 0 1920 1040"><path d="M1228 215C1265 209 1310 203 1354 203C1370 203 1385 205 1400 206C1406 208 1411 214 1414 218C1418 232 1421 245 1424 257C1425 262 1424 267 1422 270C1417 275 1410 278 1405 283C1398 287 1390 288 1383 288C1345 287 1308 285 1271 285C1250 284 1232 281 1213 281C1198 281 1183 284 1170 283C1166 283 1164 283 1163 281C1158 273 1151 267 1148.500 260C1147 252 1146 245 1146 237C1146 231 1147 226 1149 222C1152 219 1156 217 1160 218C1171 219 1183 222 1194 221C1205 220 1214 219 1223 216C1231 213 1239 210 1245 207M1228 215L1233 219" fill="none" stroke="#0000dc" stroke-width="2" stroke-linecap="round"/></svg>
</body></html>
